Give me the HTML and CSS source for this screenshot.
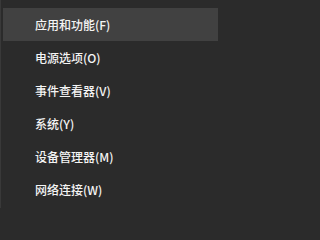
FILE: index.html
```html
<!DOCTYPE html>
<html lang="zh-CN">
<head>
<meta charset="utf-8">
<link rel="stylesheet" href="styles.css">
</head>
<body>
<div class="menu">
  <div class="item active">应用和功能(F)</div>
  <div class="item">电源选项(O)</div>
  <div class="item">事件查看器(V)</div>
  <div class="item">系统(Y)</div>
  <div class="item">设备管理器(M)</div>
  <div class="item">网络连接(W)</div>
</div>
</body>
</html>
```
FILE: styles.css
```css
html, body {
  margin: 0;
  padding: 0;
  background: #2b2b2b;
}
body {
  width: 218px;
  height: 208px;
  overflow: hidden;
  font-family: "Noto Sans CJK SC", "Noto Sans", sans-serif;
  font-size: 12px;
  font-weight: 500;
  color: #f4f4f4;
}
.menu {
  height: 208px;
  box-sizing: border-box;
  border-left: 1px solid #393939;
  padding: 8px 0 0 2px;
  display: flex;
  flex-direction: column;
}
.item {
  height: 33px;
  display: flex;
  align-items: center;
  padding-left: 32px;
  line-height: 1;
}
.item.active {
  background: #414141;
}
```
